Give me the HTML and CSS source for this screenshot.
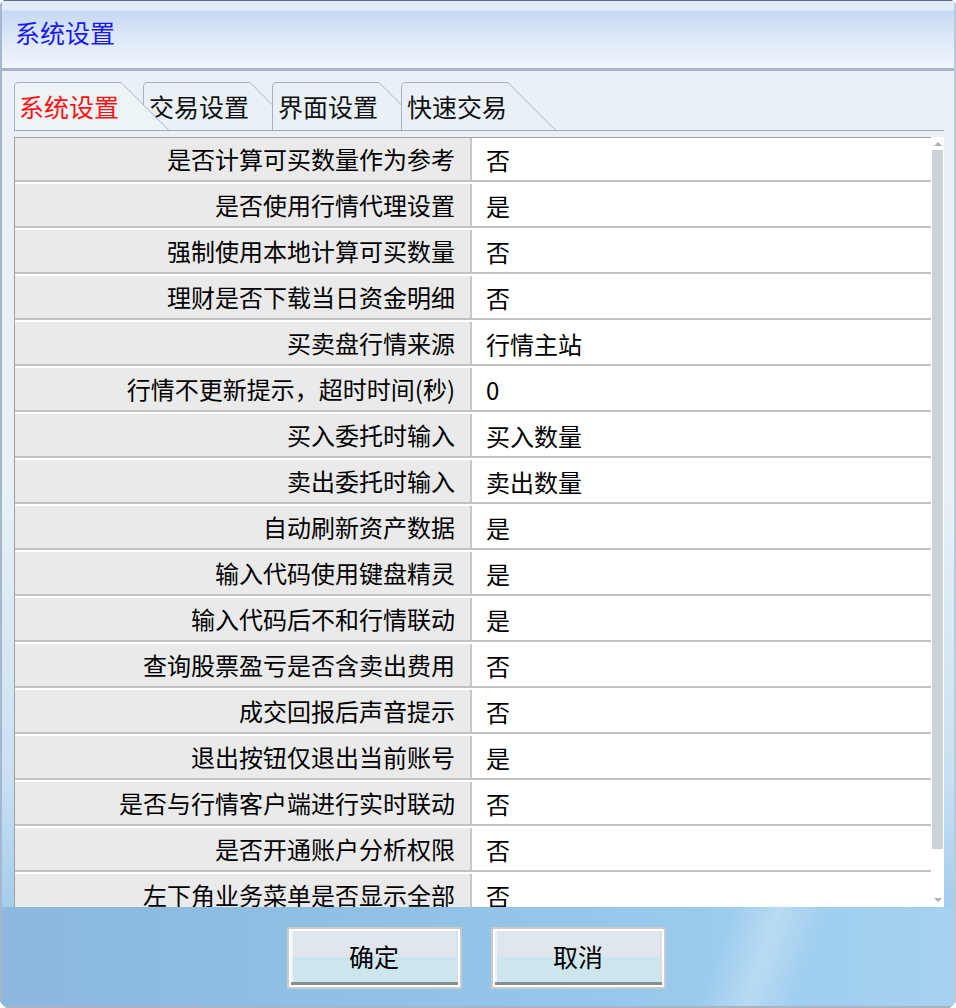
FILE: index.html
```html
<!DOCTYPE html>
<html lang="zh-CN">
<head>
<meta charset="utf-8">
<title>系统设置</title>
<link rel="stylesheet" href="styles.css">
</head>
<body>
<div class="window">
  <div class="titlebar"><span class="title">系统设置</span></div>
  <div class="content">
    <div class="tabstrip">
      <div class="tab tab-active">
        <svg class="tab-shape" width="154" height="48" viewBox="0 0 154 48"><path d="M0.5 48 V5 Q0.5 0.5 5 0.5 H107 L154.5 48" fill="#edf4f8" stroke="#a8b0bc" stroke-width="1"/></svg>
        <span class="tab-label">系统设置</span>
      </div>
      <div class="tab tab-2">
        <svg class="tab-shape" width="154" height="48" viewBox="0 0 154 48"><path d="M0.5 48 V5 Q0.5 0.5 5 0.5 H107 L154.5 48" fill="#e9f1f6" stroke="#a8b0bc" stroke-width="1"/></svg>
        <span class="tab-label">交易设置</span>
      </div>
      <div class="tab tab-3">
        <svg class="tab-shape" width="154" height="48" viewBox="0 0 154 48"><path d="M0.5 48 V5 Q0.5 0.5 5 0.5 H107 L154.5 48" fill="#e9f1f6" stroke="#a8b0bc" stroke-width="1"/></svg>
        <span class="tab-label">界面设置</span>
      </div>
      <div class="tab tab-4">
        <svg class="tab-shape" width="154" height="48" viewBox="0 0 154 48"><path d="M0.5 48 V5 Q0.5 0.5 5 0.5 H107 L154.5 48" fill="#e9f1f6" stroke="#a8b0bc" stroke-width="1"/></svg>
        <span class="tab-label">快速交易</span>
      </div>
    </div>
    <div class="grid-wrap">
      <div class="grid">
        <div class="row"><div class="key">是否计算可买数量作为参考</div><div class="val">否</div></div>
        <div class="row"><div class="key">是否使用行情代理设置</div><div class="val">是</div></div>
        <div class="row"><div class="key">强制使用本地计算可买数量</div><div class="val">否</div></div>
        <div class="row"><div class="key">理财是否下载当日资金明细</div><div class="val">否</div></div>
        <div class="row"><div class="key">买卖盘行情来源</div><div class="val">行情主站</div></div>
        <div class="row"><div class="key">行情不更新提示，超时时间(秒)</div><div class="val">0</div></div>
        <div class="row"><div class="key">买入委托时输入</div><div class="val">买入数量</div></div>
        <div class="row"><div class="key">卖出委托时输入</div><div class="val">卖出数量</div></div>
        <div class="row"><div class="key">自动刷新资产数据</div><div class="val">是</div></div>
        <div class="row"><div class="key">输入代码使用键盘精灵</div><div class="val">是</div></div>
        <div class="row"><div class="key">输入代码后不和行情联动</div><div class="val">是</div></div>
        <div class="row"><div class="key">查询股票盈亏是否含卖出费用</div><div class="val">否</div></div>
        <div class="row"><div class="key">成交回报后声音提示</div><div class="val">否</div></div>
        <div class="row"><div class="key">退出按钮仅退出当前账号</div><div class="val">是</div></div>
        <div class="row"><div class="key">是否与行情客户端进行实时联动</div><div class="val">否</div></div>
        <div class="row"><div class="key">是否开通账户分析权限</div><div class="val">否</div></div>
        <div class="row"><div class="key">左下角业务菜单是否显示全部</div><div class="val">否</div></div>
      </div>
      <div class="scrollbar">
        <div class="arrow arrow-up"></div>
        <div class="track"><div class="thumb"></div></div>
        <div class="arrow arrow-down"></div>
      </div>
    </div>
  </div>
  <div class="footer">
    <button class="btn"><span class="btn-face">确定</span></button>
    <button class="btn"><span class="btn-face">取消</span></button>
  </div>
</div>
</body>
</html>
```

FILE: styles.css
```css
html, body {
  margin: 0;
  padding: 0;
  background: #ffffff;
}

body {
  font-family: "Noto Sans CJK SC", "Noto Sans", "DejaVu Sans", sans-serif;
  color: #000;
}

.window {
  width: 956px;
  height: 1008px;
  box-sizing: border-box;
  border-left: 2px solid #a6b6cc;
  border-right: 2px solid #bccad8;
  border-bottom: 2px solid #a8b4c0;
  display: flex;
  flex-direction: column;
  background: linear-gradient(to bottom, #e9f1f6 0, #e9f1f6 480px, #c8e0f2 780px, #a4cdec 906px, #90bfe3 1008px);
  clip-path: polygon(4px 0, calc(100% - 4px) 0, 100% 4px, 100% calc(100% - 6px), calc(100% - 6px) 100%, 6px 100%, 0 calc(100% - 6px), 0 4px);
}

.titlebar {
  height: 68px;
  flex: none;
  border-top: 1px solid #5d6e88;
  box-sizing: border-box;
  background: linear-gradient(to bottom, #e2ecf8 0, #e2ecf8 9px, #c5d8f2 10px, #dbe7f7 35px, #f1f6fd 100%);
  display: flex;
  align-items: center;
  padding-left: 13px;
  padding-bottom: 6px;
  position: relative;
}

.titlebar::after {
  content: "";
  position: absolute;
  left: 0;
  right: 0;
  bottom: -3px;
  height: 3px;
  background: #a9b5c6;
}

.title {
  font-size: 25px;
  color: #1a1af0;
  line-height: 30px;
}

.content {
  flex: none;
  height: 836px;
  padding: 11px 10px 0 12px;
  margin-top: 3px;
  box-sizing: border-box;
  display: flex;
  flex-direction: column;
}

.tabstrip {
  height: 48px;
  border-bottom: 1px solid #a2aab6;
  display: flex;
  flex: none;
}

.tab {
  position: relative;
  width: 154px;
  height: 48px;
  flex: none;
  margin-left: -25px;
}

.tab-active { margin-left: 0; z-index: 10; }
.tab-2 { z-index: 1; }
.tab-3 { z-index: 2; }
.tab-4 { z-index: 3; }

.tab-shape {
  position: absolute;
  left: 0;
  top: 0;
  overflow: visible;
}

.tab-label {
  position: relative;
  z-index: 1;
  display: block;
  font-size: 25px;
  line-height: 48px;
  padding-left: 5px;
  color: #111;
  white-space: nowrap;
}

.tab-2 .tab-label,
.tab-3 .tab-label,
.tab-4 .tab-label {
  padding-left: 6px;
}

.tab-active .tab-label {
  color: #ff1010;
}

.grid-wrap {
  margin-top: 6px;
  height: 770px;
  display: flex;
  flex: none;
}

.grid {
  flex: 1;
  overflow: hidden;
  border-top: 1px solid #a0a0a0;
  border-left: 1px solid #a0a0a0;
  background: #ffffff;
}

.row {
  display: flex;
  border-top: 2px solid #ffffff;
  border-bottom: 2px solid #c2c2c2;
}

.row:first-child {
  border-top: 0;
}

.key {
  width: 440px;
  flex: none;
  height: 42px;
  line-height: 42px;
  font-size: 24px;
  text-align: right;
  padding-right: 15px;
  background: #eaeaea;
  border-right: 2px solid #c6c6c6;
  white-space: nowrap;
}

.val {
  flex: 1;
  height: 42px;
  line-height: 44px;
  font-size: 24px;
  padding-left: 14px;
  background: #ffffff;
  white-space: nowrap;
}

.scrollbar {
  width: 13px;
  flex: none;
  background: #ffffff;
  display: flex;
  flex-direction: column;
  border-top: 1px solid #ffffff;
  box-sizing: border-box;
}

.arrow {
  height: 12px;
  flex: none;
  display: flex;
  align-items: center;
  justify-content: center;
}

.arrow-up::before,
.arrow-down::before {
  content: "";
  width: 0;
  height: 0;
  border-left: 4px solid transparent;
  border-right: 4px solid transparent;
}

.arrow-up::before {
  border-bottom: 4px solid #a8b0b2;
}

.arrow-down {
  height: 14px;
}

.arrow-down::before {
  border-top: 4px solid #a8b0b2;
}

.track {
  flex: 1;
  padding: 0 1px 0 1px;
  display: flex;
  flex-direction: column;
}

.thumb {
  height: 699px;
  background: #ccd4d8;
}

.footer {
  flex: 1;
  display: flex;
  justify-content: center;
  align-items: flex-start;
  gap: 29px;
  padding-top: 20px;
  padding-right: 4px;
  background:
    linear-gradient(108deg, rgba(255,255,255,0) 0%, rgba(255,255,255,0) 74%, rgba(255,255,255,0.28) 79%, rgba(255,255,255,0) 84%, rgba(255,255,255,0) 100%),
    linear-gradient(90deg, #8bb8dc 0%, #8fbfe3 30%, #95c7eb 60%, #9dcdee 80%, #a6d2f0 100%);
}

.btn {
  width: 175px;
  height: 62px;
  padding: 0;
  margin: 0;
  border: 2px solid #cacaca;
  background: #ffffff;
  box-sizing: border-box;
  font-family: inherit;
  cursor: default;
  display: block;
}

.btn-face {
  display: block;
  margin: 2px;
  height: calc(100% - 4px);
  box-sizing: border-box;
  border-bottom: 3px solid #888e8e;
  box-shadow: inset 2px 0 0 #eef2f6, inset -2px 0 0 #d8e0e8;
  background: linear-gradient(to bottom, #dfe6ee 0, #dfe6ee 50%, #cde6ee 52%, #cde6ee 100%);
  font-size: 25px;
  line-height: 51px;
  color: #000;
  text-align: center;
}
```
